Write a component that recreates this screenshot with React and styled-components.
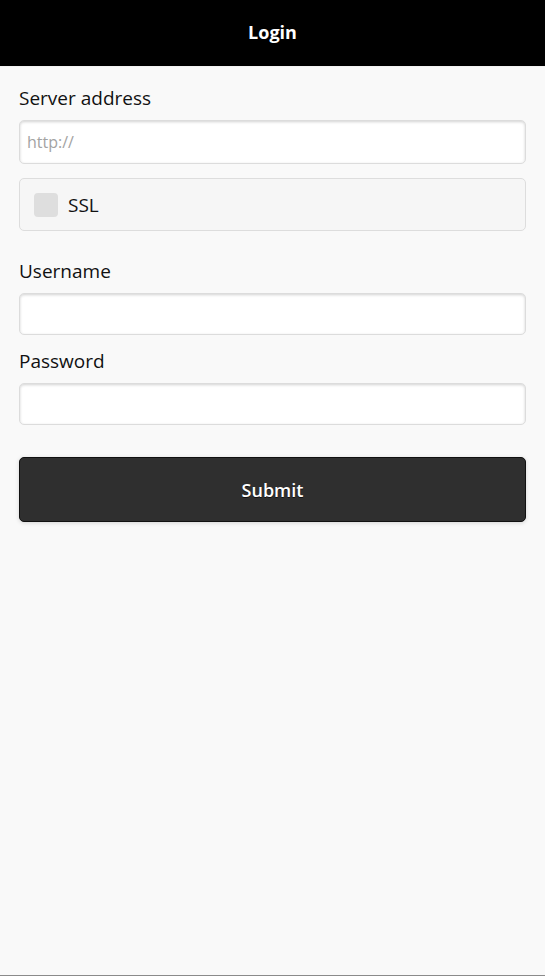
import React from "react";
import styled, { createGlobalStyle } from "styled-components";

const Global = createGlobalStyle`
  html, body { margin: 0; padding: 0; background: #f9f9f9; }
  body { font-family: "Open Sans", "Noto Sans", sans-serif; color: #333; }
  * { box-sizing: border-box; }
`;

const Page = styled.div`
  min-height: 100vh;
  display: flex;
  flex-direction: column;
  background: #f9f9f9;
  border-bottom: 1px solid #8a8a8a;
`;

const Header = styled.header`
  height: 67px;
  background: #000;
  border-bottom: 1px solid #f2f2f2;
  display: flex;
  align-items: center;
  justify-content: center;
  padding-bottom: 2px;
`;

const Title = styled.h1`
  margin: 0;
  color: #fff;
  font-size: 18px;
  font-weight: 700;
  font-family: "Open Sans", sans-serif;
`;

const Content = styled.form`
  display: flex;
  flex-direction: column;
  padding: 19px 19px;
`;

const Field = styled.div`
  display: flex;
  flex-direction: column;
  margin-top: ${(p) => p.$mt || 0}px;
`;

const Label = styled.label`
  font-size: 19px;
  line-height: 24px;
  color: #111;
  margin-bottom: 10px;
`;

const Input = styled.input`
  height: ${(p) => p.$h || 42}px;
  width: 100%;
  background: #fff;
  border: 1px solid #dcdcdc;
  border-radius: 5px;
  box-shadow: inset 0 1px 3px rgba(0, 0, 0, 0.18);
  font-family: "Open Sans", sans-serif;
  font-size: 16px;
  padding: 0 7px;
  color: #333;
  outline: none;
  &::placeholder { color: #a3a3a3; }
`;

const CheckRow = styled.label`
  margin-top: 14px;
  height: 53px;
  display: flex;
  align-items: center;
  gap: 10px;
  padding-left: 14px;
  background: #f6f6f6;
  border: 1px solid #dddddd;
  border-radius: 5px;
  font-size: 19px;
  color: #111;
`;

const Box = styled.span`
  width: 24px;
  height: 24px;
  border-radius: 4px;
  background: #dedede;
`;

const Button = styled.button`
  margin-top: 32px;
  height: 65px;
  width: 100%;
  background: #2f2f2f;
  border: 1px solid #111;
  border-radius: 5px;
  box-shadow: 0 1px 4px rgba(0, 0, 0, 0.15);
  color: #fff;
  font-family: "Open Sans", sans-serif;
  font-weight: 600;
  font-size: 18px;
  text-shadow: 0 1px 0 #111;
  cursor: pointer;
`;

export default function App() {
  return (
    <>
      <Global />
      <Page>
        <Header>
          <Title>Login</Title>
        </Header>
        <Content onSubmit={(e) => e.preventDefault()}>
          <Field>
            <Label>Server address</Label>
            <Input $h={44} placeholder="http://" />
          </Field>
          <CheckRow>
            <Box />
            SSL
          </CheckRow>
          <Field $mt={28}>
            <Label>Username</Label>
            <Input />
          </Field>
          <Field $mt={14}>
            <Label>Password</Label>
            <Input type="password" />
          </Field>
          <Button type="submit">Submit</Button>
        </Content>
      </Page>
    </>
  );
}
